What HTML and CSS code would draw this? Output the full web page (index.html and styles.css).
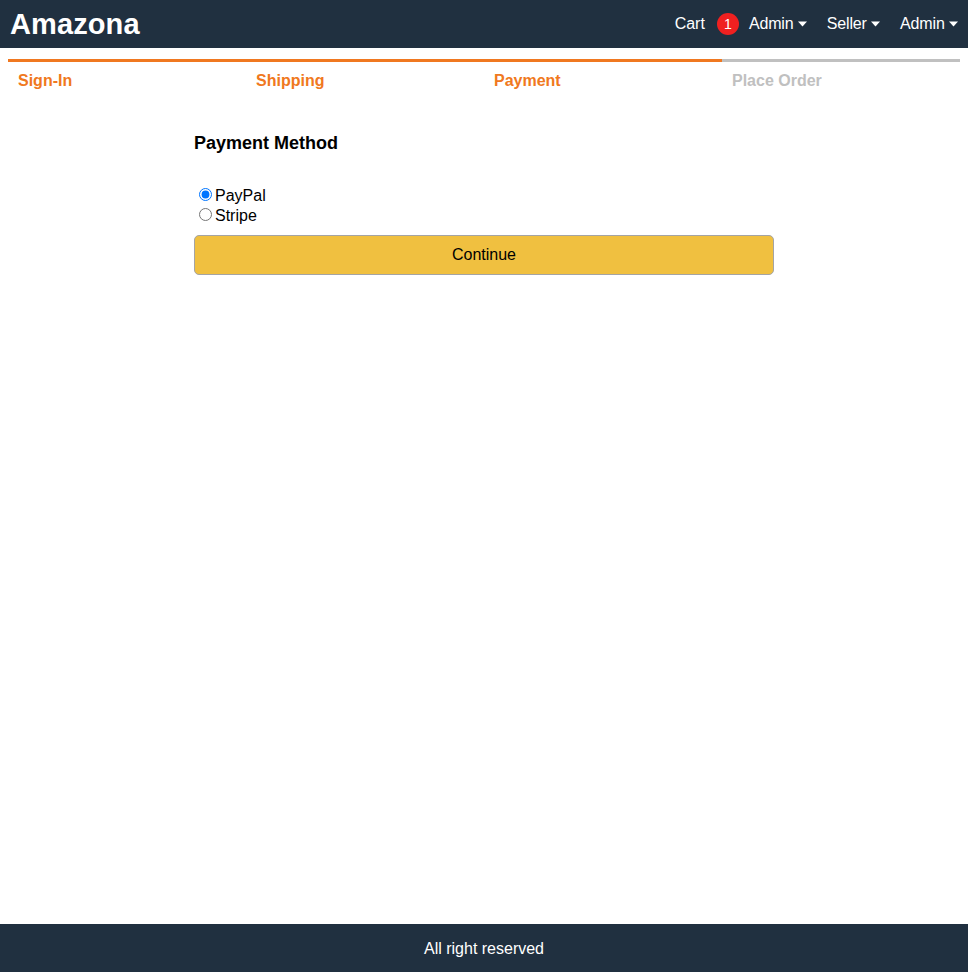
FILE: index.html
```html
<!DOCTYPE html>
<html lang="en">
<head>
<meta charset="utf-8">
<title>Amazona</title>
<link rel="stylesheet" href="styles.css">
</head>
<body>
<div class="grid-container">
  <header class="header">
    <div><a class="brand" href="#">Amazona</a></div>
    <div class="nav">
      <a href="#">Cart</a><span class="badge">1</span>
      <a href="#" class="dd">Admin <svg class="caret" width="9" height="6" viewBox="0 0 9 6"><path d="M0 0.5h9L4.5 5.5z" fill="#fff"/></svg></a>
      <a href="#" class="dd">Seller <svg class="caret" width="9" height="6" viewBox="0 0 9 6"><path d="M0 0.5h9L4.5 5.5z" fill="#fff"/></svg></a>
      <a href="#" class="dd">Admin <svg class="caret" width="9" height="6" viewBox="0 0 9 6"><path d="M0 0.5h9L4.5 5.5z" fill="#fff"/></svg></a>
    </div>
  </header>
  <main class="main">
    <div class="checkout-steps">
      <div class="active">Sign-In</div>
      <div class="active">Shipping</div>
      <div class="active">Payment</div>
      <div>Place Order</div>
    </div>
    <form class="form">
      <div class="form-row">
        <h1>Payment Method</h1>
      </div>
      <div class="radios">
        <div><input type="radio" id="paypal" name="pm" checked><label for="paypal">PayPal</label></div>
        <div><input type="radio" id="stripe" name="pm"><label for="stripe">Stripe</label></div>
      </div>
      <div class="form-row">
        <button class="primary" type="button">Continue</button>
      </div>
    </form>
  </main>
  <footer class="footer">All right reserved</footer>
</div>
</body>
</html>
```
FILE: styles.css
```css
html, body {
  margin: 0;
  padding: 0;
  height: 100%;
}
body {
  font-family: "Liberation Sans", Arial, Helvetica, sans-serif;
  font-size: 16px;
  color: #000;
}
.grid-container {
  display: grid;
  grid-template-rows: 48px 1fr 48px;
  height: 100vh;
}
.header {
  background-color: #203040;
  display: flex;
  justify-content: space-between;
  align-items: center;
}
.header a {
  color: #fff;
  text-decoration: none;
  padding: 10px;
}
.header .brand {
  font-size: 29px;
  font-weight: bold;
  letter-spacing: 0.1px;
}
.nav {
  display: flex;
  align-items: center;
}
.nav .dd {
  letter-spacing: -0.15px;
}
.badge {
  display: inline-block;
  width: 22px;
  height: 22px;
  line-height: 22px;
  text-align: center;
  background-color: #f02020;
  color: #fff;
  border-radius: 50%;
  font-size: 14px;
  margin-left: 2px;
}
.caret {
  vertical-align: middle;
  margin-top: -2px;
}
.main {
  padding: 11px 8px 10px;
}
.checkout-steps {
  display: flex;
}
.checkout-steps > div {
  flex: 1;
  border-top: 3px solid #c0c0c0;
  color: #c0c0c0;
  padding: 10px;
  font-weight: bold;
}
.checkout-steps > div.active {
  border-top-color: #f07820;
  color: #f07820;
}
.form {
  max-width: 600px;
  margin: 0 auto;
}
.form-row {
  display: flex;
  flex-direction: column;
  margin: 10px;
}
.form h1 {
  font-size: 18px;
  margin: 23px 0 12px;
}
.radios {
  margin: 0 10px;
  padding-top: 9px;
}
.radios input {
  margin: 3px 3px 0 5px;
}
button.primary {
  background-color: #f0c040;
  border: 1px solid #a4a4a4;
  border-radius: 5px;
  padding: 10px;
  font-family: inherit;
  font-size: 16px;
  color: #000;
}
.footer {
  background-color: #203040;
  color: #fff;
  display: flex;
  justify-content: center;
  align-items: center;
  padding-top: 2px;
}
```
